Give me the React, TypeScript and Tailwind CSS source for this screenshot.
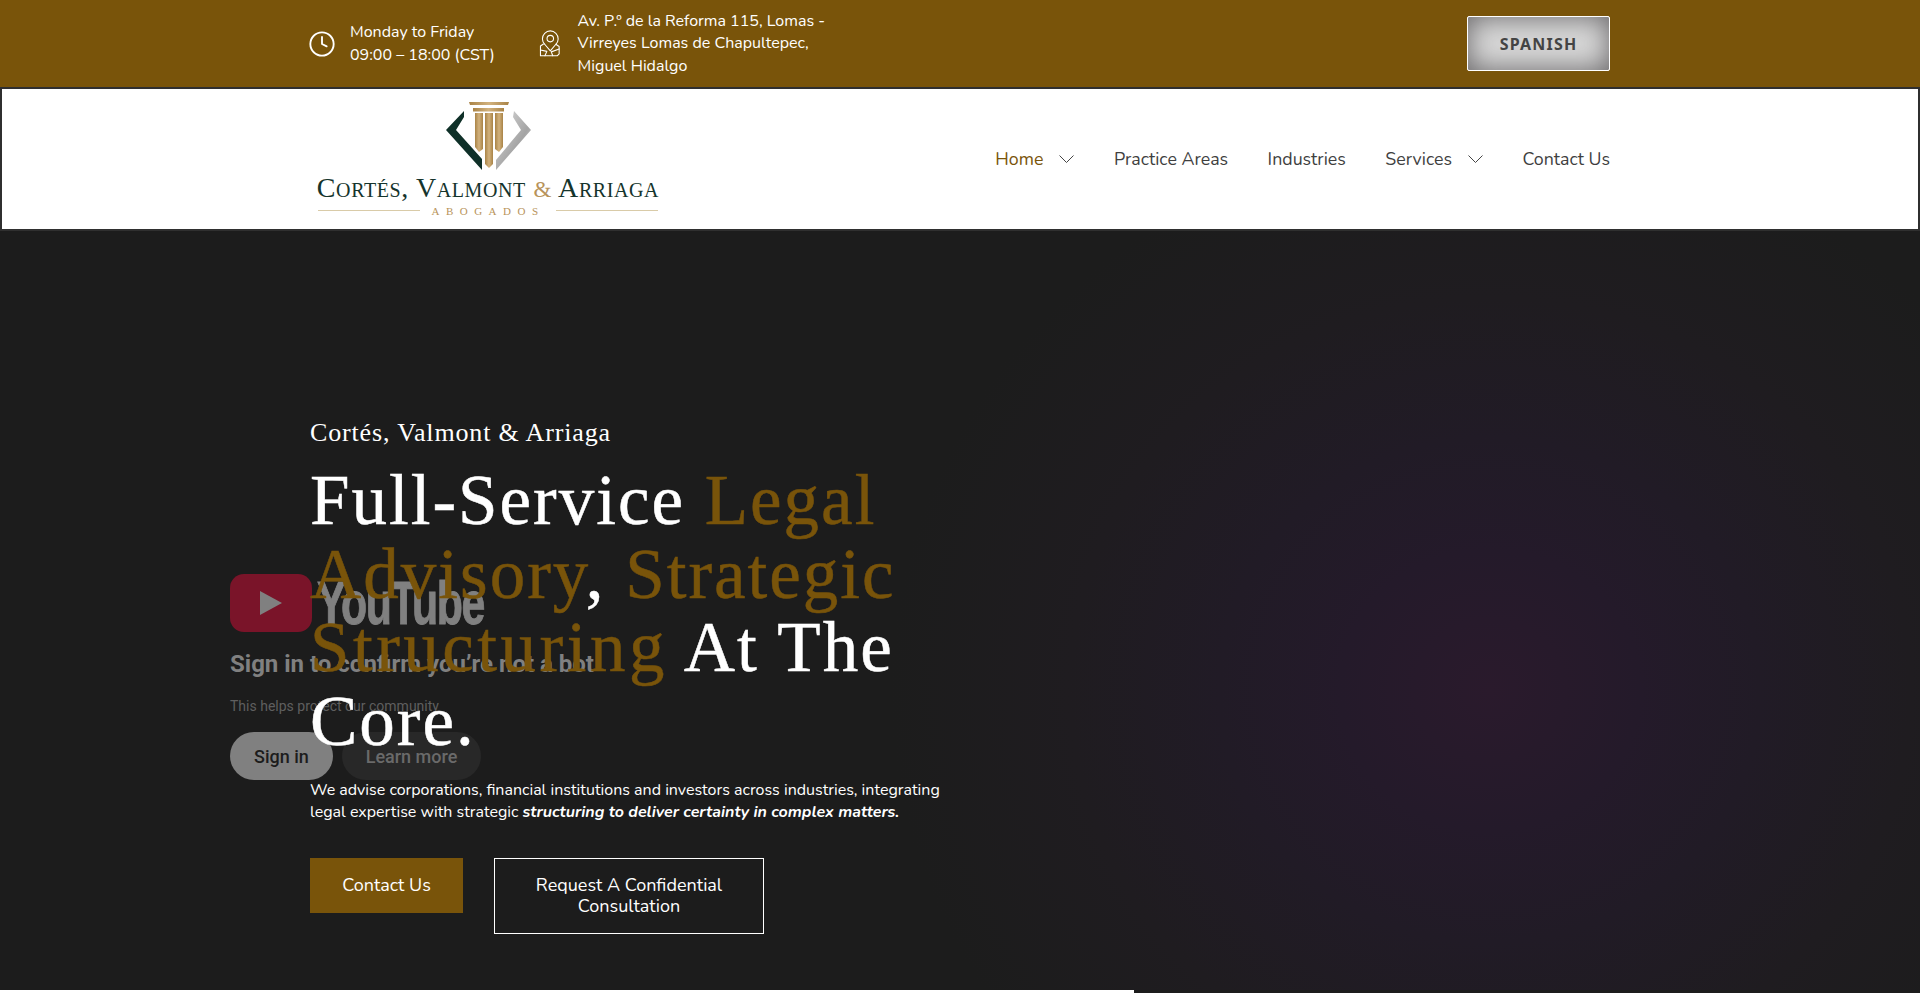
import { Clock } from "lucide-react";

const nunito = "font-['Nunito','Lato','Noto_Sans',sans-serif]";

function LogoMark() {
  return (
    <svg width="85" height="70" viewBox="0 0 85 70">
      <defs>
        <linearGradient id="gold" x1="0" x2="1" y1="0" y2="0">
          <stop offset="0" stopColor="#a98346" />
          <stop offset="0.5" stopColor="#d2b27e" />
          <stop offset="1" stopColor="#a98346" />
        </linearGradient>
        <linearGradient id="silver" x1="0" x2="1" y1="0" y2="1">
          <stop offset="0" stopColor="#dedede" />
          <stop offset="0.6" stopColor="#a4a4a4" />
          <stop offset="1" stopColor="#d8d8d8" />
        </linearGradient>
      </defs>
      <path d="M23 0H63L62 3H24Z" fill="url(#gold)" />
      <rect x="27" y="6" width="31" height="3.5" fill="url(#gold)" />
      <path d="M29 11H37V47L33 50L29 45Z" fill="url(#gold)" />
      <path d="M39 11H47V62L43 66L39 62Z" fill="url(#gold)" />
      <path d="M49 11H57V45L53 50L49 47Z" fill="url(#gold)" />
      <path d="M18 9L0 28L36 68V57L10 28L18 15Z" fill="#0f3028" />
      <path d="M68 9L85 28L50 68V58L75 28L67 15Z" fill="url(#silver)" />
    </svg>
  );
}

function LocationIcon() {
  return (
    <svg width="24" height="28" viewBox="8 6 24 28" fill="none" stroke="currentColor" strokeWidth="1.1" strokeLinejoin="round" strokeLinecap="round">
      <path d="M20.5 27L15 20.5A8 8 0 1 1 26 20.5Z" />
      <circle cx="20.5" cy="14.5" r="3.3" />
      <path d="M13.5 20L10.5 22V32H27.5L29.5 30V22.5L26.5 20.5" />
      <path d="M10.5 26L17 27.5L15 32M23 32L21.5 28L29.5 25" />
    </svg>
  );
}

function Logo() {
  return (
    <div className="flex w-[352px] flex-col items-center pl-[4px] pt-[1px]">
      <LogoMark />
      <div className="mt-[2px] whitespace-nowrap font-['Liberation_Serif',serif] text-[28px] leading-[28px] tracking-[0.6px] text-[#15342c] [font-variant:small-caps]">
        Cortés, Valmont <span className="text-[23px] text-[#b8935a]">&amp;</span> Arriaga
      </div>
      <div className="mt-[1px] flex w-[340px] items-center gap-[11px]">
        <div className="h-px flex-1 bg-[#d9cba8]" />
        <div className="font-['Liberation_Serif',serif] text-[11px] leading-[12px] tracking-[6.5px] text-[#b8935a]">ABOGADOS</div>
        <div className="h-px flex-1 bg-[#d9cba8]" />
      </div>
    </div>
  );
}

function Chevron() {
  return (
    <svg width="15" height="8" viewBox="0 0 15 8" fill="none" stroke="#444444" strokeWidth="1">
      <path d="M0.5 0.5L7.5 7.5L14.5 0.5" />
    </svg>
  );
}

function NavItem({ label, active, chevron }: { label: string; active?: boolean; chevron?: boolean }) {
  return (
    <div className={`flex items-center gap-[16px] text-[17.8px] leading-[24px] ${active ? "text-[#79540a]" : "text-[#3f3f3f]"}`}>
      <span>{label}</span>
      {chevron && <Chevron />}
    </div>
  );
}

function YouTubeOverlay() {
  return (
    <div className="absolute left-[230px] top-[343px] z-0 font-['Roboto',sans-serif]">
      <div className="flex h-[58px] items-center">
        <div className="flex h-[58px] w-[82px] items-center justify-center rounded-[14px] bg-[#7a1429]">
          <svg width="24" height="26" viewBox="0 0 24 26">
            <path d="M1 1L23 13L1 25Z" fill="#808080" />
          </svg>
        </div>
        <div className="ml-[5px] w-[164px] origin-left scale-x-[0.69] whitespace-nowrap font-['Liberation_Sans',sans-serif] text-[62px] font-bold leading-[58px] tracking-[-2px] text-[#808080] [-webkit-text-stroke:1px]">
          YouTube
        </div>
      </div>
      <div className="mt-[16px] whitespace-nowrap text-[24px] font-bold leading-[32px] text-[#808080]">Sign in to confirm you’re not a bot</div>
      <div className="mt-[16px] text-[14px] leading-[20px] text-[#5f5f5f]">This helps protect our community</div>
      <div className="mt-[16px] flex gap-[9px]">
        <div className="flex h-[48px] w-[103px] items-center justify-center rounded-full bg-[#808080] text-[18px] font-medium text-[#1c1c1c]">Sign in</div>
        <div className="flex h-[48px] w-[139px] items-center justify-center rounded-full bg-[#282828] text-[18px] font-medium text-[#6a6a6a]">Learn more</div>
      </div>
    </div>
  );
}

export default function App() {
  return (
    <div className={`h-[993px] overflow-hidden bg-[#1c1c1c] ${nunito}`}>
      <div className="h-[87px] bg-[#79540a] text-white">
        <div className="mx-auto flex h-full w-[1300px] items-center">
          <div className="flex w-[228px] items-center gap-[14px]">
            <Clock size={28} strokeWidth={1.6} className="-ml-[2px]" />
            <div className="text-[16px] leading-[22.5px]">
              <div>Monday to Friday</div>
              <div>09:00 – 18:00 (CST)</div>
            </div>
          </div>
          <div className="flex w-[320px] items-center gap-[16px]">
            <LocationIcon />
            <div className="w-[285px] text-[16px] leading-[22.5px]">
              Av. P.º de la Reforma 115, Lomas - Virreyes Lomas de Chapultepec, Miguel Hidalgo
            </div>
          </div>
          <div className="ml-auto flex h-[55px] w-[143px] items-center justify-center rounded-[2px] border border-white bg-[#d8d8d8] font-['Noto_Sans',sans-serif] text-[16px] font-bold tracking-[1.2px] text-[#444444] shadow-[inset_0_0_28px_#656365]">
            SPANISH
          </div>
        </div>
      </div>

      <div className="h-[144px] border-2 border-[#2f2f2f] bg-white">
        <div className="mx-auto flex h-full w-[1300px] items-center justify-between pb-[1px]">
          <Logo />
          <div className="flex items-center gap-[39.5px]">
            <NavItem label="Home" active chevron />
            <NavItem label="Practice Areas" />
            <NavItem label="Industries" />
            <NavItem label="Services" chevron />
            <NavItem label="Contact Us" />
          </div>
        </div>
      </div>

      <div className="relative h-[759px] bg-[radial-gradient(ellipse_600px_560px_at_1490px_459px,#2a1a2c_0%,#241a2a_25%,#211b26_45%,#1f1c20_70%,#1c1c1c_100%)]">
        <YouTubeOverlay />
        <div className="relative z-10 mx-auto w-[1300px] pt-[185px] text-white">
          <div className="font-['Liberation_Serif',serif] text-[26px] leading-[34px] tracking-[0.85px]">Cortés, Valmont &amp; Arriaga</div>
          <h1 className="mt-[14px] w-[640px] font-['Liberation_Serif',serif] text-[71px] font-normal leading-[73.5px] tracking-[2px] [-webkit-text-stroke:0.5px]">
            Full-Service <span className="text-[#79540a]">Legal Advisory</span>, <span className="text-[#79540a]">Strategic <span className="tracking-[3.5px]">Structuring</span></span> At The Core.
          </h1>
          <p className="mt-[21px] w-[650px] text-[16px] leading-[22px]">
            We advise corporations, financial institutions and investors across industries, integrating legal expertise with strategic <b className="font-bold italic">structuring to deliver certainty in complex matters.</b>
          </p>
          <div className="mt-[35px] flex items-start gap-[31px]">
            <div className="flex h-[55px] w-[153px] items-center justify-center bg-[#79540a] text-[18px]">Contact Us</div>
            <div className="flex h-[76px] w-[270px] items-center justify-center border border-white px-[30px] text-center text-[18px] leading-[21px]">
              Request A Confidential Consultation
            </div>
          </div>
        </div>
      </div>
      <div className="h-[3px] w-[1134px] bg-white" />
    </div>
  );
}
